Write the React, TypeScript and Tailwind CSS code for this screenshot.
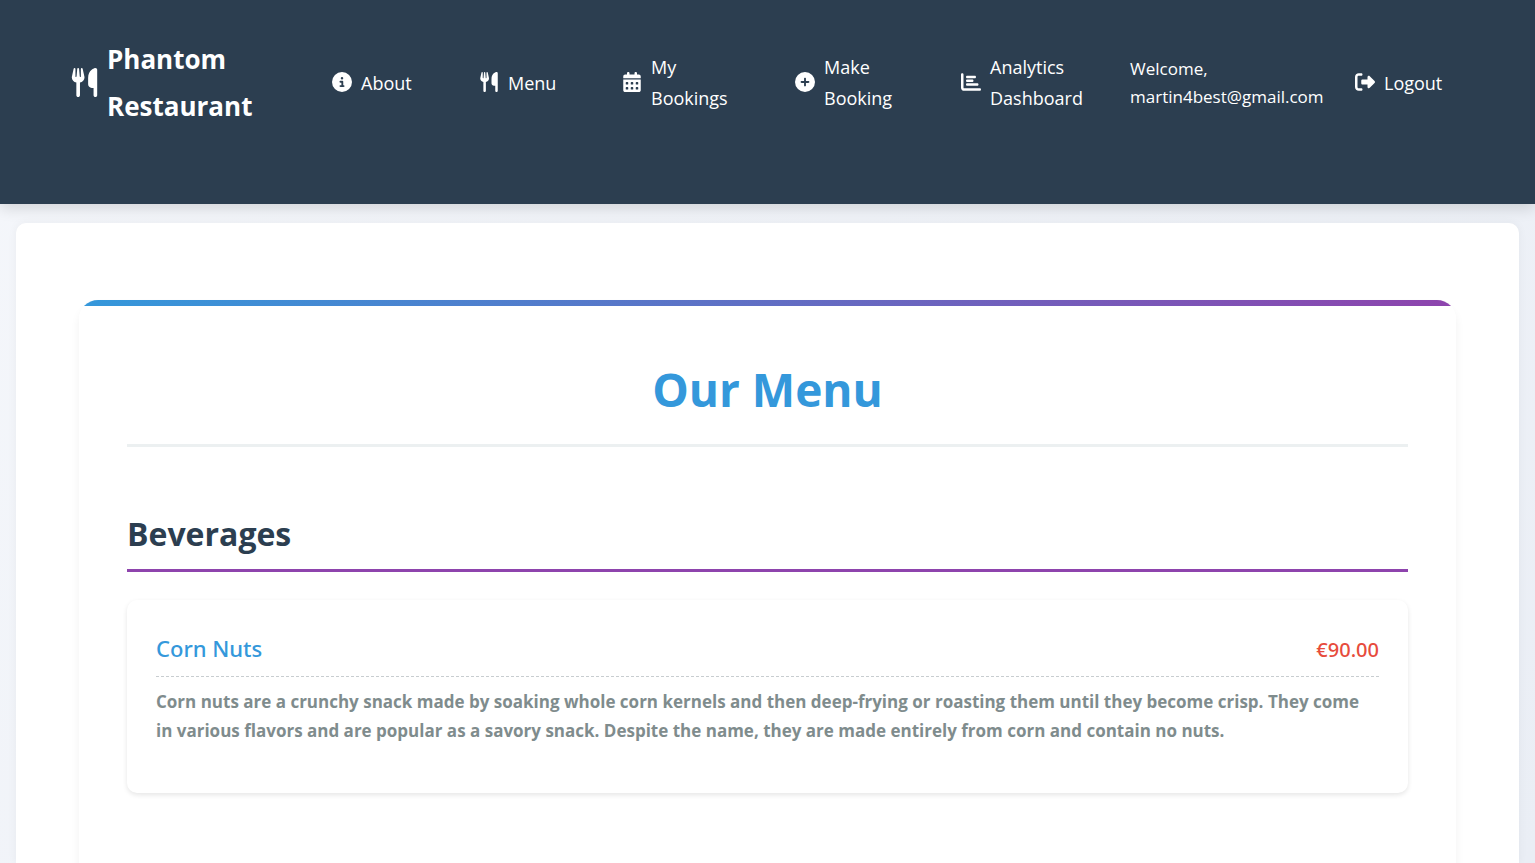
import type { ReactNode } from "react";
import {
  FaCalendarDays,
  FaChartBar,
  FaCircleInfo,
  FaCirclePlus,
  FaRightFromBracket,
  FaUtensils,
} from "react-icons/fa6";

type MenuItem = { name: string; price: string; description: string };

const beverages: MenuItem[] = [
  {
    name: "Corn Nuts",
    price: "€90.00",
    description:
      "Corn nuts are a crunchy snack made by soaking whole corn kernels and then deep-frying or roasting them until they become crisp. They come in various flavors and are popular as a savory snack. Despite the name, they are made entirely from corn and contain no nuts.",
  },
];

function NavLink({ icon, children }: { icon: ReactNode; children: ReactNode }) {
  return (
    <a href="#" className="flex items-center gap-[9px] text-[18px] leading-[31px]">
      <span className="shrink-0 pb-[2px] text-[20px]">{icon}</span>
      <span>{children}</span>
    </a>
  );
}

function Header() {
  return (
    <header className="relative bg-[#2c3e50] pt-9 pr-[90px] pb-[74px] pl-[70px] text-white shadow-[0_4px_14px_rgba(0,0,0,0.14)]">
      <nav className="grid grid-cols-[262fr_147fr_143fr_173fr_166fr_169fr_225fr_90fr] items-center">
        <a href="#" className="flex items-center gap-2 text-[26px] leading-[47px] font-bold">
          <span className="shrink-0 pb-[2px] text-[29px]">
            <FaUtensils />
          </span>
          <span>
            Phantom
            <br />
            Restaurant
          </span>
        </a>
        <NavLink icon={<FaCircleInfo />}>About</NavLink>
        <NavLink icon={<FaUtensils />}>Menu</NavLink>
        <NavLink icon={<FaCalendarDays />}>
          My
          <br />
          Bookings
        </NavLink>
        <NavLink icon={<FaCirclePlus />}>
          Make
          <br />
          Booking
        </NavLink>
        <NavLink icon={<FaChartBar />}>
          Analytics
          <br />
          Dashboard
        </NavLink>
        <p className="text-[17px] leading-[28px]">
          Welcome,
          <br />
          martin4best@gmail.com
        </p>
        <NavLink icon={<FaRightFromBracket />}>Logout</NavLink>
      </nav>
    </header>
  );
}

function ItemCard({ item }: { item: MenuItem }) {
  return (
    <article className="rounded-[10px] bg-white px-[29px] pt-[29px] pb-12 shadow-[0_2px_5px_rgba(0,0,0,0.1)]">
      <div className="flex items-baseline justify-between border-b border-dashed border-[#c8cdd0] pb-[9px] font-['Noto_Sans','Open_Sans',sans-serif] font-medium">
        <h3 className="text-[22px] leading-[38px] text-[#3498db]">{item.name}</h3>
        <span className="text-[20px] leading-[30px] text-[#e74c3c]">{item.price}</span>
      </div>
      <p className="mt-[10px] text-[17px] leading-[29px] font-bold text-[#7f8c8d]">
        {item.description}
      </p>
    </article>
  );
}

export default function App() {
  return (
    <div className="flex min-h-screen flex-col bg-linear-135 from-[#f5f7fb] to-[#eaeef5] font-['Open_Sans','Noto_Sans',sans-serif]">
      <Header />
      <main className="mx-4 mt-[19px] flex grow flex-col rounded-t-[10px] bg-white px-[63px] pt-[77px] shadow-[0_0_10px_rgba(0,0,0,0.05)]">
        <section className="flex grow flex-col rounded-t-[19px] shadow-[0_6px_10px_rgba(0,0,0,0.06)]">
          <div className="grow overflow-hidden rounded-t-[19px] bg-white">
            <div className="h-[6px] bg-[linear-gradient(to_right,#3498db,#8e44ad)]" />
            <div className="px-12 pt-11">
              <h1 className="border-b-[3px] border-[#ecf0f1] pb-4 text-center text-[46px] leading-[78px] font-bold text-[#3498db]">
                Our Menu
              </h1>
              <h2 className="mt-[58px] border-b-[3px] border-[#8e44ad] pb-[6px] text-[32px] leading-[58px] font-bold text-[#2c3e50]">
                Beverages
              </h2>
              <div className="mt-7 pb-16">
                {beverages.map((item) => (
                  <ItemCard key={item.name} item={item} />
                ))}
              </div>
            </div>
          </div>
        </section>
      </main>
    </div>
  );
}
